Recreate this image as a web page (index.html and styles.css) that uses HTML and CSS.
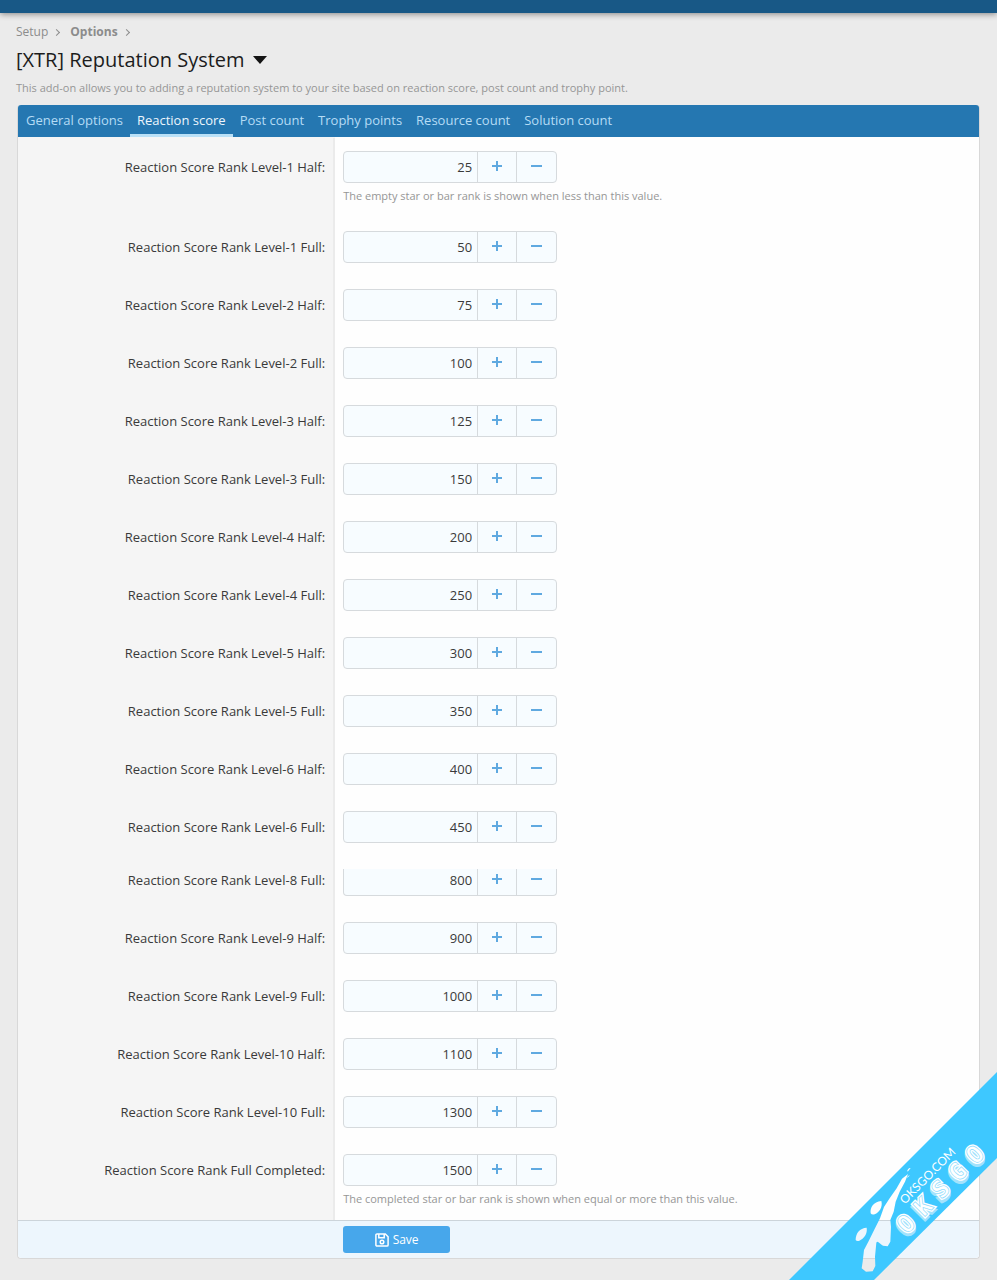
FILE: index.html
```
<!DOCTYPE html>
<html lang="en">
<head>
  <meta charset="UTF-8">
  <meta name="viewport" content="width=device-width, initial-scale=1.0">
  <title>[XTR] Reputation System</title>
  <link rel="stylesheet" href="styles.css">
</head>
<body>
  <header class="topbar"></header>

  <main class="page">
    <nav class="breadcrumb" aria-label="Breadcrumb">
      <a href="#">Setup</a><i class="chevron"></i>
      <a href="#" class="current">Options</a><i class="chevron"></i>
    </nav>
    <h1 class="title">[XTR] Reputation System <i class="caret"></i></h1>
    <p class="description">This add-on allows you to adding a reputation system to your site based on reaction score, post count and trophy point.</p>

    <form class="block">
      <nav class="tabs">
        <a href="#" class="tab">General options</a>
        <a href="#" class="tab active">Reaction score</a>
        <a href="#" class="tab">Post count</a>
        <a href="#" class="tab">Trophy points</a>
        <a href="#" class="tab">Resource count</a>
        <a href="#" class="tab">Solution count</a>
      </nav>

      <div class="rows">
        <div class="row">
          <div class="term"><label for="l1h">Reaction Score Rank Level-1 Half:</label></div>
          <div class="value">
            <div class="spinner"><input type="number" id="l1h" value="25"><button type="button" class="plus" aria-label="Increase"></button><button type="button" class="minus" aria-label="Decrease"></button></div>
            <p class="hint">The empty star or bar rank is shown when less than this value.</p>
          </div>
        </div>
        <div class="row">
          <div class="term"><label for="l1f">Reaction Score Rank Level-1 Full:</label></div>
          <div class="value">
            <div class="spinner"><input type="number" id="l1f" value="50"><button type="button" class="plus" aria-label="Increase"></button><button type="button" class="minus" aria-label="Decrease"></button></div>
          </div>
        </div>
        <div class="row">
          <div class="term"><label for="l2h">Reaction Score Rank Level-2 Half:</label></div>
          <div class="value">
            <div class="spinner"><input type="number" id="l2h" value="75"><button type="button" class="plus" aria-label="Increase"></button><button type="button" class="minus" aria-label="Decrease"></button></div>
          </div>
        </div>
        <div class="row">
          <div class="term"><label for="l2f">Reaction Score Rank Level-2 Full:</label></div>
          <div class="value">
            <div class="spinner"><input type="number" id="l2f" value="100"><button type="button" class="plus" aria-label="Increase"></button><button type="button" class="minus" aria-label="Decrease"></button></div>
          </div>
        </div>
        <div class="row">
          <div class="term"><label for="l3h">Reaction Score Rank Level-3 Half:</label></div>
          <div class="value">
            <div class="spinner"><input type="number" id="l3h" value="125"><button type="button" class="plus" aria-label="Increase"></button><button type="button" class="minus" aria-label="Decrease"></button></div>
          </div>
        </div>
        <div class="row">
          <div class="term"><label for="l3f">Reaction Score Rank Level-3 Full:</label></div>
          <div class="value">
            <div class="spinner"><input type="number" id="l3f" value="150"><button type="button" class="plus" aria-label="Increase"></button><button type="button" class="minus" aria-label="Decrease"></button></div>
          </div>
        </div>
        <div class="row">
          <div class="term"><label for="l4h">Reaction Score Rank Level-4 Half:</label></div>
          <div class="value">
            <div class="spinner"><input type="number" id="l4h" value="200"><button type="button" class="plus" aria-label="Increase"></button><button type="button" class="minus" aria-label="Decrease"></button></div>
          </div>
        </div>
        <div class="row">
          <div class="term"><label for="l4f">Reaction Score Rank Level-4 Full:</label></div>
          <div class="value">
            <div class="spinner"><input type="number" id="l4f" value="250"><button type="button" class="plus" aria-label="Increase"></button><button type="button" class="minus" aria-label="Decrease"></button></div>
          </div>
        </div>
        <div class="row">
          <div class="term"><label for="l5h">Reaction Score Rank Level-5 Half:</label></div>
          <div class="value">
            <div class="spinner"><input type="number" id="l5h" value="300"><button type="button" class="plus" aria-label="Increase"></button><button type="button" class="minus" aria-label="Decrease"></button></div>
          </div>
        </div>
        <div class="row">
          <div class="term"><label for="l5f">Reaction Score Rank Level-5 Full:</label></div>
          <div class="value">
            <div class="spinner"><input type="number" id="l5f" value="350"><button type="button" class="plus" aria-label="Increase"></button><button type="button" class="minus" aria-label="Decrease"></button></div>
          </div>
        </div>
        <div class="row">
          <div class="term"><label for="l6h">Reaction Score Rank Level-6 Half:</label></div>
          <div class="value">
            <div class="spinner"><input type="number" id="l6h" value="400"><button type="button" class="plus" aria-label="Increase"></button><button type="button" class="minus" aria-label="Decrease"></button></div>
          </div>
        </div>
        <div class="row">
          <div class="term"><label for="l6f">Reaction Score Rank Level-6 Full:</label></div>
          <div class="value">
            <div class="spinner"><input type="number" id="l6f" value="450"><button type="button" class="plus" aria-label="Increase"></button><button type="button" class="minus" aria-label="Decrease"></button></div>
          </div>
        </div>
        <div class="row cut">
          <div class="term"><label for="l8f">Reaction Score Rank Level-8 Full:</label></div>
          <div class="value">
            <div class="spinner"><input type="number" id="l8f" value="800"><button type="button" class="plus" aria-label="Increase"></button><button type="button" class="minus" aria-label="Decrease"></button></div>
          </div>
        </div>
        <div class="row">
          <div class="term"><label for="l9h">Reaction Score Rank Level-9 Half:</label></div>
          <div class="value">
            <div class="spinner"><input type="number" id="l9h" value="900"><button type="button" class="plus" aria-label="Increase"></button><button type="button" class="minus" aria-label="Decrease"></button></div>
          </div>
        </div>
        <div class="row">
          <div class="term"><label for="l9f">Reaction Score Rank Level-9 Full:</label></div>
          <div class="value">
            <div class="spinner"><input type="number" id="l9f" value="1000"><button type="button" class="plus" aria-label="Increase"></button><button type="button" class="minus" aria-label="Decrease"></button></div>
          </div>
        </div>
        <div class="row">
          <div class="term"><label for="l10h">Reaction Score Rank Level-10 Half:</label></div>
          <div class="value">
            <div class="spinner"><input type="number" id="l10h" value="1100"><button type="button" class="plus" aria-label="Increase"></button><button type="button" class="minus" aria-label="Decrease"></button></div>
          </div>
        </div>
        <div class="row">
          <div class="term"><label for="l10f">Reaction Score Rank Level-10 Full:</label></div>
          <div class="value">
            <div class="spinner"><input type="number" id="l10f" value="1300"><button type="button" class="plus" aria-label="Increase"></button><button type="button" class="minus" aria-label="Decrease"></button></div>
          </div>
        </div>
        <div class="row">
          <div class="term"><label for="full">Reaction Score Rank Full Completed:</label></div>
          <div class="value">
            <div class="spinner"><input type="number" id="full" value="1500"><button type="button" class="plus" aria-label="Increase"></button><button type="button" class="minus" aria-label="Decrease"></button></div>
            <p class="hint">The completed star or bar rank is shown when equal or more than this value.</p>
          </div>
        </div>
      </div>

      <div class="submit">
        <button type="submit" class="save">
          <svg width="14" height="14" viewBox="0 0 14 14" fill="none" stroke="#fff" stroke-width="1.5">
            <path d="M2 .9h8.300l2.800 2.800V12a1.100 1.100 0 0 1-1.100 1.100H2A1.100 1.100 0 0 1 .9 12V2A1.100 1.100 0 0 1 2 .9z"/>
            <path d="M3.800 1v3.800h5.400V1"/>
            <circle cx="7" cy="9" r="1.800"/>
          </svg>
          Save
        </button>
      </div>
    </form>
  </main>

  <svg class="ribbon" width="217" height="220" viewBox="0 0 651 660">
    <defs>
      <!-- the brush figure is cut out of the band -->
      <mask id="brush">
        <rect width="651" height="660" fill="#fff"/>
        <path d="M384 342l-18 14-16 29-22 31-16 25-12 34-15 30-20 40-13 25-4 35-3 20 13 10 20-1 8-16-1-28 4-42c4-8 10 4 20 9l14 2 8-14 2-45-2-20 10-25 6-30 12-30 16-30z" fill="#000"/>
        <path d="M272 460c-2-18 8-34 32-37 5 18-6 34-20 40q-9 2-12-3zM227 540c0-20 12-36 33-37 3 18-8 33-22 39q-8 2-11-2zM383 335l9-11-5 1-5 6zM380 355l10-9-6 2z" fill="#000"/>
      </mask>
    </defs>
    <path d="M651 36v258L282 660H27z" fill="#3ec8ff" mask="url(#brush)"/>
    <text class="site" transform="translate(374 434) rotate(-45)">OKSGO.COM</text>
    <g class="brand" transform="translate(380 524) rotate(-45)">
      <text class="brand-shadow" x="-6" y="6" aria-hidden="true">OKSGO</text>
      <text class="brand-face">OKSGO</text>
      <text class="brand-line" aria-hidden="true">OKSGO</text>
    </g>
  </svg>
</body>
</html>
```
FILE: styles.css
```
* {
  box-sizing: border-box;
  margin: 0;
  padding: 0;
}
body {
  position: relative;
  font-family: "Open Sans", "Noto Sans", sans-serif;
  font-size: 13px;
  line-height: 20px;
  color: #3a3a3a;
  background-color: #ebebeb;
}
a {
  color: inherit;
  text-decoration: none;
}
.topbar {
  height: 13px;
  background-color: #185886;
  box-shadow: 0 1px 6px rgba(0, 0, 0, .45);
}
.page {
  padding: 10px 17px 21px 16px;
}
.breadcrumb {
  display: flex;
  align-items: center;
  height: 18px;
  font-size: 12px;
  color: #8c8c8c;
}
.breadcrumb .current {
  font-weight: bold;
}
.chevron {
  width: 5px;
  height: 5px;
  margin: 0 11px 0 6px;
  border: solid #8c8c8c;
  border-width: 1px 1px 0 0;
  transform: rotate(45deg);
}
.title {
  display: flex;
  align-items: center;
  gap: 8px;
  height: 38px;
  font-size: 20px;
  font-weight: normal;
  color: #1c1c1c;
}
.caret {
  border: 7px solid transparent;
  border-top: 8px solid #141414;
  border-bottom: 0;
}
.description {
  height: 26px;
  line-height: 18px;
  font-size: 11px;
  color: #969696;
}
.block {
  margin-left: 1px;
  border: 1px solid #d8d8d8;
  border-top: 0;
  border-radius: 4px;
  background-color: #fefefe;
}
.tabs {
  display: flex;
  height: 32px;
  padding-left: 1px;
  border-radius: 3px 3px 0 0;
  background-color: #2577b1;
}
.tab {
  padding: 5px 7px 4px;
  border-bottom: 3px solid transparent;
  color: #b5dcf5;
  white-space: nowrap;
}
.tab.active {
  color: #edf6fd;
  border-color: #b9e0f7;
}
.rows {
  padding-top: 1px;
  background: linear-gradient(to right, #f5f5f5 33%, #fefefe 33%);
}
.row {
  display: flex;
}
.term {
  width: 33%;
  padding: 19px 8px 0 0;
  border-right: 2px solid #ebebeb;
  text-align: right;
}
.value {
  flex: 1;
  padding: 13px 8px;
}
.row:last-child .value {
  padding-bottom: 12px;
}
.spinner {
  display: flex;
  width: 214px;
  height: 32px;
  border: 1px solid #d6dadd;
  border-radius: 4px;
  background-color: #f7fcff;
  overflow: hidden;
}
.spinner input {
  flex: 1;
  min-width: 0;
  padding-right: 5px;
  border: 0;
  background: none;
  font: inherit;
  color: #3a3a3a;
  text-align: right;
  appearance: textfield;
}
.spinner input::-webkit-inner-spin-button {
  appearance: none;
}
.spinner button {
  width: 40px;
  border: 0;
  border-left: 1px solid #d6dadd;
  background: linear-gradient(#5fa9e0, #5fa9e0) center 13px / 11px 2px no-repeat;
}
.spinner .plus {
  width: 39px;
  background: linear-gradient(#5fa9e0, #5fa9e0) center 13px / 10px 2px no-repeat, linear-gradient(#5fa9e0, #5fa9e0) center 9px / 2px 10px no-repeat;
}
.hint {
  padding: 4px 0 0;
  line-height: 18px;
  font-size: 11px;
  color: #969696;
}
.cut .term {
  padding-top: 14px;
}
.cut .spinner {
  height: 27px;
  border-top: 0;
  border-radius: 0 0 4px 4px;
  align-items: flex-end;
}
.cut .spinner input,
.cut .spinner button {
  height: 30px;
}
.submit {
  padding: 5px 0 5px calc(33% + 8px);
  border-top: 1px solid #ccd4da;
  border-radius: 0 0 4px 4px;
  background-color: #edf6fd;
}
.save {
  display: flex;
  align-items: center;
  justify-content: center;
  gap: 4px;
  width: 107px;
  height: 27px;
  border: 0;
  border-radius: 3px;
  background-color: #47a7eb;
  font: inherit;
  font-size: 12px;
  color: #fff;
}
.ribbon {
  position: absolute;
  right: 0;
  bottom: 0;
  overflow: hidden;
}
.site {
  font: 36px Lato, sans-serif;
  fill: #fff;
}
.brand {
  font: bold 72px "DejaVu Sans Mono", monospace;
  letter-spacing: 30px;
}
.brand-shadow {
  fill: #a3e2fc;
  stroke: #a3e2fc;
  stroke-width: 12;
}
.brand-face {
  fill: #fff;
  stroke: #fff;
  stroke-width: 10;
}
.brand-line {
  fill: none;
  stroke: #8fdcfd;
  stroke-width: 2;
}
```
